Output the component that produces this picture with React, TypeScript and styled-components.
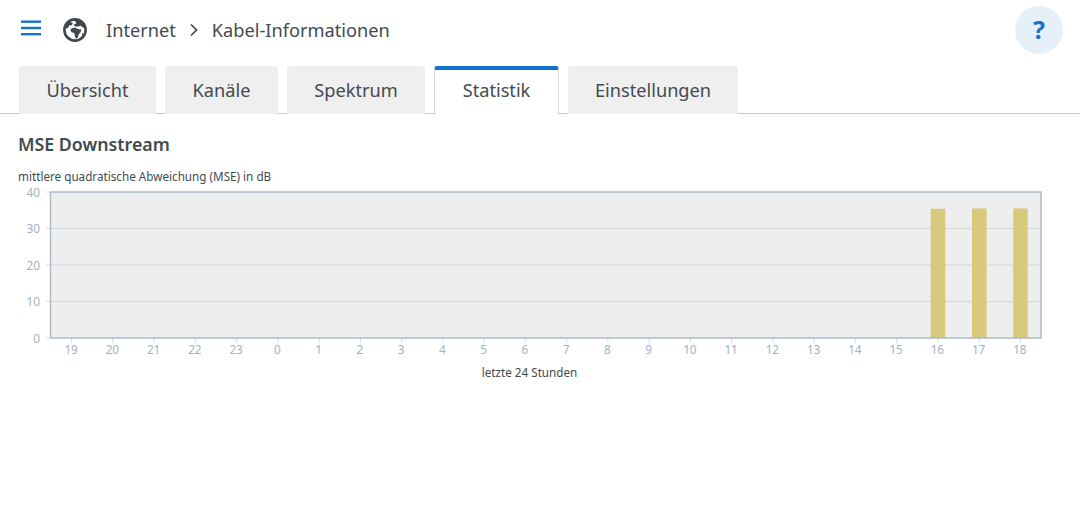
import React from "react";
import styled, { createGlobalStyle } from "styled-components";

const GlobalStyle = createGlobalStyle`
  html, body {
    margin: 0;
    padding: 0;
    background: #fff;
    font-family: "Noto Sans", "Open Sans", sans-serif;
    color: #434a50;
  }
`;

const tabs = ["Übersicht", "Kanäle", "Spektrum", "Statistik", "Einstellungen"];
const tabWidths = [137, 113, 138, 125, 170];
const hours = [19, 20, 21, 22, 23, 0, 1, 2, 3, 4, 5, 6, 7, 8, 9, 10, 11, 12, 13, 14, 15, 16, 17, 18];
const values: Record<number, number> = { 16: 35.4, 17: 35.5, 18: 35.5 };

const PLOT_LEFT = 51;
const PLOT_RIGHT = 1041;
const PLOT_TOP = 192;
const PLOT_BOTTOM = 338;
const SLOT = (PLOT_RIGHT - PLOT_LEFT) / 24;
const yOf = (v: number) => PLOT_BOTTOM - ((PLOT_BOTTOM - PLOT_TOP) * v) / 40;

const Chart = () => (
  <ChartSvg width={1080} height={206} viewBox="0 184 1080 206">
    <rect x={PLOT_LEFT} y={PLOT_TOP} width={PLOT_RIGHT - PLOT_LEFT} height={PLOT_BOTTOM - PLOT_TOP} fill="#eeeeee" />
    {[10, 20, 30].map((v) => (
      <line key={v} x1={PLOT_LEFT} x2={PLOT_RIGHT} y1={yOf(v)} y2={yOf(v)} stroke="#d2d7df" strokeWidth={1} />
    ))}
    {[0, 10, 20, 30, 40].map((v) => (
      <g key={v}>
        <line x1={46} x2={PLOT_LEFT} y1={yOf(v)} y2={yOf(v)} stroke="#d6dde6" strokeWidth={1} />
        <AxisText x={40} y={yOf(v) + 4.5} textAnchor="end">
          {v}
        </AxisText>
      </g>
    ))}
    {hours.map((h, i) => {
      const cx = PLOT_LEFT + SLOT * (i + 0.5);
      return (
        <g key={h}>
          <line x1={cx} x2={cx} y1={PLOT_BOTTOM} y2={PLOT_BOTTOM + 5} stroke="#d6dde6" strokeWidth={1} />
          <AxisText x={cx - 0.5} y={354} textAnchor="middle">
            {h}
          </AxisText>
          {values[h] !== undefined && (
            <rect x={cx - 7.2} y={yOf(values[h])} width={14.6} height={PLOT_BOTTOM - yOf(values[h])} fill="#d9c97c" />
          )}
        </g>
      );
    })}
    <rect x={PLOT_LEFT - 0.5} y={PLOT_TOP} width={PLOT_RIGHT - PLOT_LEFT + 0.5} height={PLOT_BOTTOM - PLOT_TOP} fill="none" stroke="#aebbcb" strokeWidth={1.5} />
    <LabelText x={529.5} y={377} textAnchor="middle">
      letzte 24 Stunden
    </LabelText>
  </ChartSvg>
);

const Globe = () => (
  <svg width="24" height="24" viewBox="0 0 24 24">
    <circle cx="12" cy="12" r="10.6" fill="#fff" stroke="#3f464c" strokeWidth="2.6" />
    {/* Europa und Asien */}
    <path d="M7 3.5 L10 5.4 L8.6 7.2 L6.2 7.6 L5.2 9.8 L2.6 10.8 L2.8 7 Z" fill="#3f464c" />
    <path d="M11.5 2 L20 4.2 L22.4 10 L19.6 9.6 L18 7.8 L14.8 8.6 L12 8.4 L10.6 6.8 L13.4 5.4 Z" fill="#3f464c" />
    {/* Afrika */}
    <path d="M8.4 10.6 L11.4 9.6 L14 10.4 L15.6 11.2 L18.6 11.4 L17.4 14.4 L15.6 16.4 L15 19.6 L12.8 20.8 L11.8 17.6 L11.2 15 L8.6 14.2 L7.4 12.4 Z" fill="#3f464c" />
    <path d="M19.4 15 L20.4 15.4 L19.6 18 L18.8 17.4 Z" fill="#3f464c" />
  </svg>
);

export default function App() {
  return (
    <Page>
      <GlobalStyle />
      <Header>
        <MenuButton aria-label="Menü">
          <svg width="20" height="16" viewBox="0 0 20 16">
            <rect x="0" y="0.5" width="20" height="2.4" fill="#1273ce" />
            <rect x="0" y="6.8" width="20" height="2.4" fill="#1273ce" />
            <rect x="0" y="13" width="20" height="2.4" fill="#1273ce" />
          </svg>
        </MenuButton>
        <GlobeIcon>
          <Globe />
        </GlobeIcon>
        <Crumb>Internet</Crumb>
        <Chevron width="10" height="14" viewBox="0 0 10 14">
          <path d="M2 1.5 L7.5 7 L2 12.5" fill="none" stroke="#3f464c" strokeWidth="1.7" />
        </Chevron>
        <Crumb>Kabel-Informationen</Crumb>
        <HelpButton>?</HelpButton>
      </Header>
      <TabBar>
        {tabs.map((tab, i) => (
          <Tab key={tab} $active={tab === "Statistik"} $width={tabWidths[i]}>
            {tab}
          </Tab>
        ))}
      </TabBar>
      <Content>
        <Title>MSE Downstream</Title>
        <Caption>mittlere quadratische Abweichung (MSE) in dB</Caption>
      </Content>
      <Chart />
    </Page>
  );
}

const Page = styled.div`
  width: 1080px;
  height: 527px;
  overflow: hidden;
  background: #fff;
`;

const Header = styled.header`
  display: flex;
  align-items: center;
  height: 60px;
  padding: 0 17px 0 21px;
  box-sizing: border-box;
`;

const MenuButton = styled.div`
  display: flex;
  width: 20px;
  height: 16px;
  margin-top: -4px;
`;

const GlobeIcon = styled.div`
  display: flex;
  margin-left: 22px;
  margin-right: 19px;
`;

const Crumb = styled.span`
  font-size: 18.2px;
  padding-bottom: 1px;
  color: #434a50;
`;

const Chevron = styled.svg`
  margin: 0 13px 0 13px;
`;

const HelpButton = styled.div`
  margin-left: auto;
  width: 48px;
  height: 48px;
  border-radius: 50%;
  background: #e5f0f9;
  color: #1273ce;
  font-size: 25px;
  font-weight: 700;
  padding-bottom: 2px;
  box-sizing: border-box;
  display: flex;
  align-items: center;
  justify-content: center;
`;

const TabBar = styled.nav`
  display: flex;
  gap: 9px;
  height: 54px;
  padding: 6px 0 0 19px;
  box-sizing: border-box;
  border-bottom: 1px solid #c8c8c8;
`;

const Tab = styled.div<{ $active: boolean; $width: number }>`
  width: ${(p) => p.$width}px;
  height: ${(p) => (p.$active ? 49 : 48)}px;
  box-sizing: border-box;
  display: flex;
  align-items: center;
  justify-content: center;
  font-size: 18.2px;
  color: #434a50;
  border-radius: 3px 3px 0 0;
  padding-bottom: ${(p) => (p.$active ? 5 : 0)}px;
  background: ${(p) => (p.$active ? "#fff" : "#efefef")};
  border-top: ${(p) => (p.$active ? "4px solid #1273ce" : "none")};
  border-left: ${(p) => (p.$active ? "1px solid #d9d9d9" : "none")};
  border-right: ${(p) => (p.$active ? "1px solid #d9d9d9" : "none")};
`;

const Content = styled.section`
  padding: 18px 18px 0;
`;

const Title = styled.h2`
  margin: 0;
  font-size: 17.8px;
  line-height: 24px;
  font-weight: 600;
  color: #434a50;
`;

const Caption = styled.div`
  margin-top: 12px;
  font-size: 11.7px;
  line-height: 16px;
  color: #434a50;
`;

const ChartSvg = styled.svg`
  display: block;
`;

const AxisText = styled.text`
  font-family: "Noto Sans", sans-serif;
  font-size: 11.8px;
  fill: #a3b1c4;
`;

const LabelText = styled.text`
  font-family: "Noto Sans", sans-serif;
  font-size: 11.7px;
  fill: #434a50;
`;
